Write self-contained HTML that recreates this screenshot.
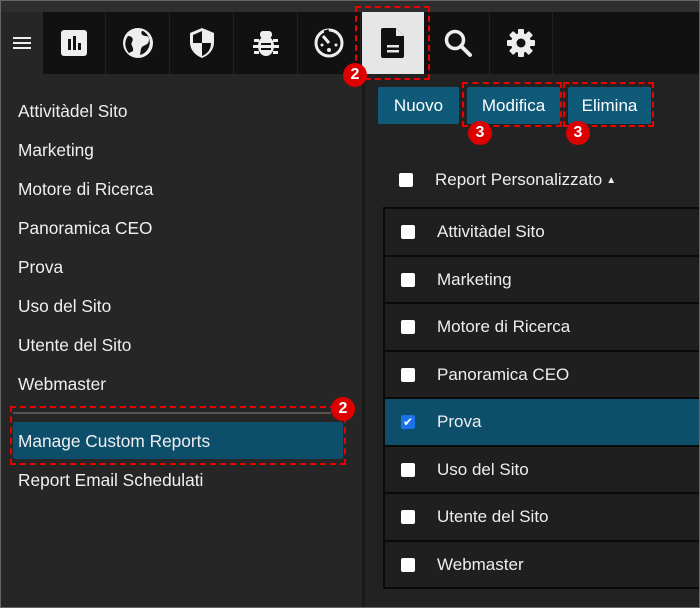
<!DOCTYPE html>
<html><head><meta charset="utf-8"><style>
*{margin:0;padding:0;box-sizing:border-box}
body{width:700px;height:608px;background:#262626;font-family:"Liberation Sans",sans-serif;color:#eee;position:relative;overflow:hidden}
.a{position:absolute}
.frame{left:0;top:0;width:700px;height:608px;border:1px solid #666;pointer-events:none}
.cell{top:12px;height:62px;width:63px;background:#111;border-right:1px solid #222;display:flex;align-items:center;justify-content:center}
.si{left:18px;font-size:17.3px;color:#f0f0f0}
.btn{top:87px;height:37px;background:#0f5a78;border-radius:2px;color:#fff;font-size:17px;display:flex;align-items:center;justify-content:center}
.dash{border:2px dashed #e00}
.badge{width:24px;height:24px;border-radius:50%;background:#d00;color:#fff;font-weight:bold;font-size:16px;display:flex;align-items:center;justify-content:center}
.row{left:383px;width:317px;height:48px;border-top:2px solid #0a0a0a;border-left:2px solid #0a0a0a;background:#1f1f1f;font-size:17px;display:flex;align-items:center}
.cb{width:14px;height:14px;background:#fff;border-radius:2px;margin-left:16px;margin-right:22px;flex:none}
</style></head><body>
<div class="a" style="left:0;top:0;width:700px;height:12px;background:#2e2e2e"></div>
<div class="a" style="left:0;top:12px;width:700px;height:62px;background:#111"></div>
<div class="a" style="left:0;top:12px;width:43px;height:62px;background:#262626;display:flex;align-items:center;justify-content:center">
<svg width="18" height="14"><rect y="1" width="18" height="2" fill="#eee"/><rect y="6" width="18" height="2" fill="#eee"/><rect y="11" width="18" height="2" fill="#eee"/></svg></div>
<div class="a cell" style="left:43px"><svg width="28" height="28"><rect x="1" y="1" width="26" height="26" rx="3" fill="#eee"/><rect x="8" y="10" width="3" height="11" fill="#111"/><rect x="13" y="7" width="3" height="14" fill="#111"/><rect x="18" y="14" width="3" height="7" fill="#111"/></svg></div>
<div class="a cell" style="left:107px"><svg width="32" height="32"><circle cx="16" cy="16" r="15" fill="#eee"/><path d="M6 9c4 0 6 3 4 6s2 5 1 9l-4 2A13 13 0 0 1 6 9zM20 4c-2 3 1 5 4 5s4 4 2 7c-2 3-6 2-7 6l-1 6a13 13 0 0 0 3-24z" fill="#111"/></svg></div>
<div class="a cell" style="left:171px"><svg width="28" height="32"><path d="M14 1L2 6v9c0 8 5 13 12 16 7-3 12-8 12-16V6z" fill="#eee"/><path d="M14 4v12H5v-1V8zM14 16h9c0 7-4 11-9 13z" fill="#111"/></svg></div>
<div class="a cell" style="left:235px"><svg width="28" height="30" viewBox="0 0 28 30"><g fill="#eee"><rect x="8" y="3" width="12" height="7" rx="3"/><ellipse cx="14" cy="18" rx="8" ry="10"/><rect x="2" y="11" width="5" height="3"/><rect x="21" y="11" width="5" height="3"/><rect x="1" y="17" width="6" height="3"/><rect x="21" y="17" width="6" height="3"/><rect x="2" y="23" width="5" height="3"/><rect x="21" y="23" width="5" height="3"/></g><path d="M9 16h10M9 21h10" stroke="#111" stroke-width="2"/></svg></div>
<div class="a cell" style="left:298px"><svg width="32" height="32"><circle cx="16" cy="16" r="13" fill="none" stroke="#eee" stroke-width="3"/><path d="M13 3l2 6" stroke="#111" stroke-width="5"/><path d="M10 9l6 7" stroke="#eee" stroke-width="3"/><circle cx="16" cy="23" r="2" fill="#eee"/><circle cx="9" cy="18" r="1.5" fill="#eee"/><circle cx="23" cy="18" r="1.5" fill="#eee"/></svg></div>
<div class="a" style="left:362px;top:12px;width:62px;height:62px;background:#e6e6e6;display:flex;align-items:center;justify-content:center"><svg width="24" height="32"><path d="M2 1h13l8 8v20a2 2 0 0 1-2 2H2a2 2 0 0 1-2-2V3a2 2 0 0 1 2-2z" fill="#111"/><path d="M15 1v8h8" fill="#e6e6e6"/><rect x="6" y="18" width="12" height="2.5" fill="#e6e6e6"/><rect x="6" y="23" width="12" height="2.5" fill="#e6e6e6"/></svg></div>
<div class="a cell" style="left:427px"><svg width="30" height="30"><circle cx="12" cy="12" r="8.5" fill="none" stroke="#eee" stroke-width="3.5"/><path d="M18 18l9 9" stroke="#eee" stroke-width="4" stroke-linecap="round"/></svg></div>
<div class="a cell" style="left:490px"><svg width="32" height="32" viewBox="0 0 32 32"><g fill="#eee"><circle cx="16" cy="16" r="10"/><rect x="13" y="2" width="6" height="28" rx="1"/><rect x="13" y="2" width="6" height="28" rx="1" transform="rotate(45 16 16)"/><rect x="13" y="2" width="6" height="28" rx="1" transform="rotate(90 16 16)"/><rect x="13" y="2" width="6" height="28" rx="1" transform="rotate(135 16 16)"/></g><circle cx="16" cy="16" r="4.5" fill="#111"/></svg></div>
<div class="a" style="left:553px;top:12px;width:147px;height:62px;background:#111"></div>

<div class="a" style="left:362px;top:74px;width:3px;height:534px;background:#1a1a1a"></div>
<div class="a" style="left:365px;top:74px;width:335px;height:534px;background:#222"></div>

<div class="a si" style="top:101px">Attivitàdel Sito</div>
<div class="a si" style="top:140px">Marketing</div>
<div class="a si" style="top:179px">Motore di Ricerca</div>
<div class="a si" style="top:218px">Panoramica CEO</div>
<div class="a si" style="top:257px">Prova</div>
<div class="a si" style="top:296px">Uso del Sito</div>
<div class="a si" style="top:335px">Utente del Sito</div>
<div class="a si" style="top:374px">Webmaster</div>
<div class="a" style="left:13px;top:412px;width:318px;height:2px;background:#555"></div>
<div class="a" style="left:13px;top:422px;width:330px;height:37px;background:#0d4f6a;border-radius:2px"></div>
<div class="a si" style="top:431px">Manage Custom Reports</div>
<div class="a si" style="top:470px">Report Email Schedulati</div>
<div class="a dash" style="left:10px;top:406px;width:336px;height:59px"></div>

<div class="a btn" style="left:378px;width:81px">Nuovo</div>
<div class="a btn" style="left:467px;width:93px">Modifica</div>
<div class="a btn" style="left:568px;width:83px">Elimina</div>
<div class="a dash" style="left:462px;top:82px;width:100px;height:45px"></div>
<div class="a dash" style="left:563px;top:82px;width:91px;height:45px"></div>
<div class="a dash" style="left:355px;top:6px;width:75px;height:74px"></div>

<div class="a" style="left:383px;top:170px;display:flex;align-items:center;font-size:17px"><div class="cb" style="margin-left:16px"></div>Report Personalizzato <span style="font-size:10px;margin-left:4px">▲</span></div>

<div class="a row" style="top:207px"><div class="cb"></div>Attivitàdel Sito</div>
<div class="a row" style="top:255px"><div class="cb"></div>Marketing</div>
<div class="a row" style="top:302px"><div class="cb"></div>Motore di Ricerca</div>
<div class="a row" style="top:350px"><div class="cb"></div>Panoramica CEO</div>
<div class="a row" style="top:397px;background:#0d4f6a"><div class="cb" style="background:#1a73e8;color:#fff;font-size:12px;line-height:14px;text-align:center">✔</div>Prova</div>
<div class="a row" style="top:445px"><div class="cb"></div>Uso del Sito</div>
<div class="a row" style="top:492px"><div class="cb"></div>Utente del Sito</div>
<div class="a row" style="top:540px;border-bottom:2px solid #0a0a0a;height:49px"><div class="cb"></div>Webmaster</div>

<div class="a badge" style="left:343px;top:63px">2</div>
<div class="a badge" style="left:468px;top:121px">3</div>
<div class="a badge" style="left:566px;top:121px">3</div>
<div class="a badge" style="left:331px;top:397px">2</div>
<div class="a frame"></div>
</body></html>
